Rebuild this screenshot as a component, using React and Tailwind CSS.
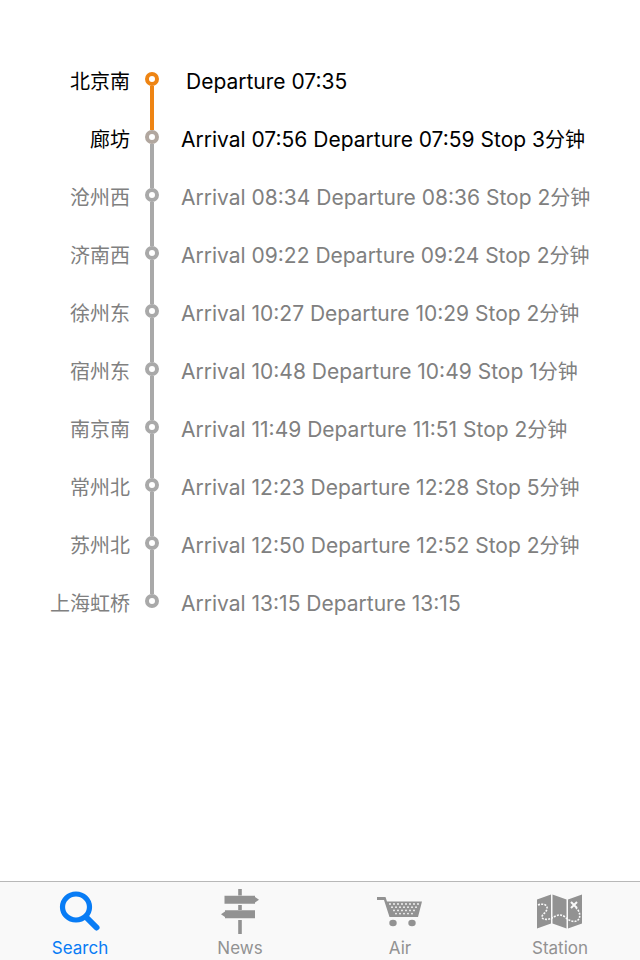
import React, { useState } from 'react';

const stops = [
    { name: '北京南', departure: '07:35', passed: true },
    { name: '廊坊', arrival: '07:56', departure: '07:59', stay: 3, current: true },
    { name: '沧州西', arrival: '08:34', departure: '08:36', stay: 2 },
    { name: '济南西', arrival: '09:22', departure: '09:24', stay: 2 },
    { name: '徐州东', arrival: '10:27', departure: '10:29', stay: 2 },
    { name: '宿州东', arrival: '10:48', departure: '10:49', stay: 1 },
    { name: '南京南', arrival: '11:49', departure: '11:51', stay: 2 },
    { name: '常州北', arrival: '12:23', departure: '12:28', stay: 5 },
    { name: '苏州北', arrival: '12:50', departure: '12:52', stay: 2 },
    { name: '上海虹桥', arrival: '13:15', departure: '13:15' },
];

const SearchIcon = () => (
    <svg viewBox="0 0 48 48" className="w-12 h-12" fill="none" stroke="currentColor" aria-hidden="true">
        <ellipse cx="20" cy="21" rx="13.5" ry="13" strokeWidth="5.2" />
        <path d="M30 31l10.500 10.500" strokeWidth="6" strokeLinecap="round" />
    </svg>
);

const SignIcon = () => (
    <svg viewBox="0 0 48 48" className="w-12 h-12" fill="currentColor" aria-hidden="true">
        <path d="M22.200 3h3.600v6.500h-3.600zM22.200 19h3.600v5h-3.600zM22.200 34h3.600v14h-3.600z" />
        <path d="M8.500 9.800h30.500v1.200l4 2.800-4 2.800v1.200H8.500zM39 24.200H9v1.200l-4 2.800 4 2.800v1.200h30z" />
    </svg>
);

const cartHoles = [
    [14, 18, 22, 26, 30, 34, 38, 42],
    [16, 20, 24, 28, 32, 36, 40],
    [18, 22, 26, 30, 34, 38],
    [20, 24, 28, 32, 36],
];

const CartIcon = () => (
    <svg viewBox="0 0 48 48" className="w-12 h-12" fill="currentColor" aria-hidden="true">
        <path d="M1 11h8.500l1.500 4.500h35L42 31H13.500L8 14H1z" />
        {cartHoles.map((row, y) => row.map(x => (
            <circle key={`${y}-${x}`} cx={x} cy={18 + y * 3.2} r="0.9" fill="#f9f9f9" />
        )))}
        <ellipse cx="17" cy="37" rx="3.700" ry="3.300" />
        <ellipse cx="36" cy="37" rx="3.700" ry="3.300" />
    </svg>
);

const MapIcon = () => (
    <svg viewBox="0 0 48 48" className="w-12 h-12" fill="currentColor" aria-hidden="true">
        <path d="M1 13.500l14-5v29L1 42.500zM16.500 8.500l14 5v29l-14-5zM32 13.500l14-5v29l-14 5z" />
        <path d="M2 19c5-2 10 0 9 4-1 4-5 5-5 8 0 3 7 3 10 1s8-5 13-1c4 4 10 6 13 3s2-9-2-12" fill="none" stroke="#f9f9f9" strokeWidth="1.6" strokeDasharray="2 1.2" />
        <path d="M35 16l6 6M41 16l-6 6" stroke="#f9f9f9" strokeWidth="2" />
    </svg>
);

const tabs = [
    { id: 'search', label: 'Search', Icon: SearchIcon },
    { id: 'news', label: 'News', Icon: SignIcon },
    { id: 'air', label: 'Air', Icon: CartIcon },
    { id: 'station', label: 'Station', Icon: MapIcon },
];

const dotColor = (stop) => {
    if (stop.passed) return 'border-[#ee8413]';
    return stop.current ? 'border-[#b1a79f]' : 'border-[#a9a9a9]';
};

const StopRow = ({ stop, first, last }) => {
    // The segment into the current station has already been travelled
    const above = first ? 'bg-transparent' : stop.current ? 'bg-[#ee8413]' : 'bg-[#a9a9a9]';
    const below = last ? 'bg-transparent' : stop.passed ? 'bg-[#ee8413]' : 'bg-[#a9a9a9]';

    return (
        <li className={`flex h-[58px] items-center ${stop.passed || stop.current ? 'text-black' : 'text-[#808080]'}`}>
            <span className="w-[130px] shrink-0 pt-1.5 text-right text-[20px]">{stop.name}</span>
            <span className="flex w-11 shrink-0 self-stretch flex-col items-center">
                <span className={`w-1 flex-1 ${above}`}></span>
                <span className={`h-3.5 w-3.5 rounded-full border-4 bg-white ${dotColor(stop)}`}></span>
                <span className={`w-1 flex-1 ${below}`}></span>
            </span>
            <span className={`pt-1.5 whitespace-nowrap text-[21px] ${first ? 'pl-3' : 'pl-[7px]'}`}>
                {stop.arrival && `Arrival ${stop.arrival} `}
                {`Departure ${stop.departure}`}
                {stop.stay && <>{` Stop ${stop.stay}`}<span className="text-[20px]">分钟</span></>}
            </span>
        </li>
    );
};

export default function App() {
    const [activeTab, setActiveTab] = useState('search');

    return (
        <div className="flex min-h-screen flex-col bg-white font-['Inter','Noto_Sans_CJK_SC',sans-serif]">
            <main className="flex-1 pt-[50px]">
                <ol className="leading-6">
                    {stops.map((stop, i) => (
                        <StopRow key={stop.name} stop={stop} first={i === 0} last={i === stops.length - 1} />
                    ))}
                </ol>
            </main>

            <nav className="flex border-t border-[#b8b8b8] bg-[#f9f9f9]">
                {tabs.map(({ id, label, Icon }) => (
                    <button
                        key={id}
                        type="button"
                        onClick={() => setActiveTab(id)}
                        className={`flex flex-1 flex-col items-center pt-1 pb-0.5 ${activeTab === id ? 'text-[#087cf5]' : 'text-[#929292]'}`}
                    >
                        <Icon />
                        <span className="mt-1 text-[17px] leading-5">{label}</span>
                    </button>
                ))}
            </nav>
        </div>
    );
}
